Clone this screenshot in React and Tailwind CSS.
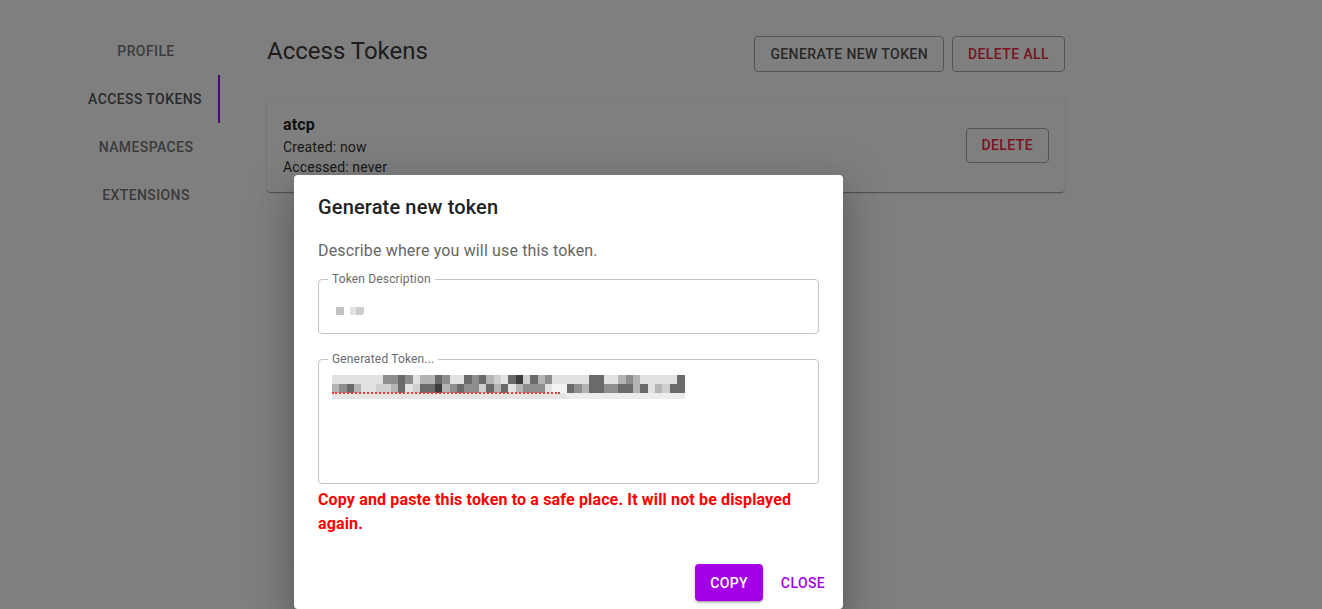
import React from "react";

const tabs = ["Profile", "Access Tokens", "Namespaces", "Extensions"];

// pixelated (redacted) token, two rows of gray cells
const shades = [
	"bg-[#e2e2e2]",
	"bg-[#cfcfcf]",
	"bg-[#b4b4b4]",
	"bg-[#8e8e8e]",
	"bg-[#6a6a6a]",
	"bg-[#3c3c3c]",
	"bg-[#f2f2f2]",
];
const rowA = "000000033430224300434210451423000004400232000004";
const rowB = "234200112401445234331424023330664324433442402144";

const TokenMosaic = () => (
	<div className="relative w-[353px] h-[24px] bg-[#e4e4e4]">
		{[rowA, rowB].map((row, r) => (
			<div key={r} className="flex h-[9px]">
				{row.split("").map((c, i) => (
					<div key={i} className={`w-[7.35px] h-full ${shades[Number(c)]}`} />
				))}
			</div>
		))}
		<div className="absolute left-0 top-[17px] w-[228px] border-b-2 border-dotted border-[#ef3b3b]" />
		<div className="absolute right-0 top-[18px] w-[120px] h-[6px] bg-[#ececec] rounded-bl-full" />
	</div>
);

const OutlinedField = ({ label, children, className }) => (
	<fieldset className={`border border-[#c4c4c4] rounded px-[13px] ${className}`}>
		<legend className="px-[4px] ml-[-4px] text-[12px] leading-[12px] tracking-[0.15px] text-[#6b6b6b]">{label}</legend>
		{children}
	</fieldset>
);

export default function App() {
	return (
		<div className="relative h-[609px] w-full overflow-hidden bg-white font-['Roboto','Liberation_Sans',sans-serif]">
			<div className="flex pt-[27px]">
				<div className="ml-[72px] w-[148px] flex flex-col">
					{tabs.map((t) => (
						<div
							key={t}
							className={`h-12 flex items-center justify-center text-sm font-medium uppercase tracking-[0.4px] ${t === "Access Tokens" ? "text-[#555] border-r-2 border-[#a400f4]" : "text-[#777]"}`}
						>
							{t}
						</div>
					))}
				</div>
				<div className="ml-[47px] w-[798px] pt-[8px]">
					<div className="flex items-start justify-between">
						<h1 className="text-2xl leading-8 text-[#3a3a3a]">Access Tokens</h1>
						<div className="flex gap-2 mt-px">
							<button className="h-[36px] px-[15px] border border-[#a8a8a8] rounded text-sm font-medium uppercase tracking-[0.4px] text-[#505050]">
								Generate new token
							</button>
							<button className="h-[36px] px-[15px] border border-[#a8a8a8] rounded text-sm font-medium uppercase tracking-[0.4px] text-[#f02a3e]">
								Delete all
							</button>
						</div>
					</div>
					<div className="mt-[25px] flex items-center justify-between px-4 pt-4 pb-[15px] rounded shadow-[0_2px_1px_-1px_rgba(0,0,0,0.2),0_1px_1px_0_rgba(0,0,0,0.14),0_1px_3px_0_rgba(0,0,0,0.12)] bg-white">
						<div className="tracking-[0.15px]">
							<div className="text-base font-bold leading-6 text-[#222]">atcp</div>
							<div className="text-sm leading-5 text-[#333]">Created: now</div>
							<div className="text-sm leading-5 text-[#333]">Accessed: never</div>
						</div>
						<button className="h-[35px] px-[15px] border border-[#a8a8a8] rounded text-sm font-medium uppercase tracking-[0.4px] text-[#f02a3e]">
							Delete
						</button>
					</div>
				</div>
			</div>

			<div className="absolute inset-0 bg-black/50" />

			<div className="absolute left-[294px] top-[175px] w-[549px] bg-white rounded shadow-[0_11px_15px_-7px_rgba(0,0,0,0.2),0_24px_38px_3px_rgba(0,0,0,0.14),0_9px_46px_8px_rgba(0,0,0,0.12)]">
				<h2 className="px-6 pt-4 text-xl font-medium leading-8 tracking-[0.15px] text-[#222]">Generate new token</h2>
				<div className="px-6 pt-[16px] pb-5 tracking-[0.15px]">
					<p className="text-base leading-6 text-[#666]">Describe where you will use this token.</p>
					<OutlinedField label="Token Description" className="mt-[10px] h-[61px] pt-[22px]">
						<div className="flex items-center gap-[6px] pl-[4px]">
							<div className="w-[8px] h-[8px] bg-[#c2c2c2]" />
							<div className="flex">
								<div className="w-[6px] h-[8px] bg-[#e2e2e2]" />
								<div className="w-[8px] h-[8px] bg-[#cdcdcd] rounded-br-[3px]" />
							</div>
						</div>
					</OutlinedField>
					<OutlinedField label="Generated Token..." className="mt-[19px] h-[131px] pt-[10px]">
						<TokenMosaic />
					</OutlinedField>
					<p className="mt-[4px] text-base font-bold leading-6 text-[#ff0000]">
						Copy and paste this token to a safe place. It will not be displayed again.
					</p>
				</div>
				<div className="flex justify-end items-center gap-2 p-2">
					<button className="h-[37px] px-[15px] rounded bg-[#a400e6] text-white text-sm font-medium uppercase tracking-[0.4px] shadow-[0_3px_1px_-2px_rgba(0,0,0,0.2),0_2px_2px_0_rgba(0,0,0,0.14),0_1px_5px_0_rgba(0,0,0,0.12)]">
						Copy
					</button>
					<button className="h-[37px] min-w-16 px-2 text-[#a400e6] text-sm font-medium uppercase tracking-[0.4px]">
						Close
					</button>
				</div>
			</div>
		</div>
	);
}
